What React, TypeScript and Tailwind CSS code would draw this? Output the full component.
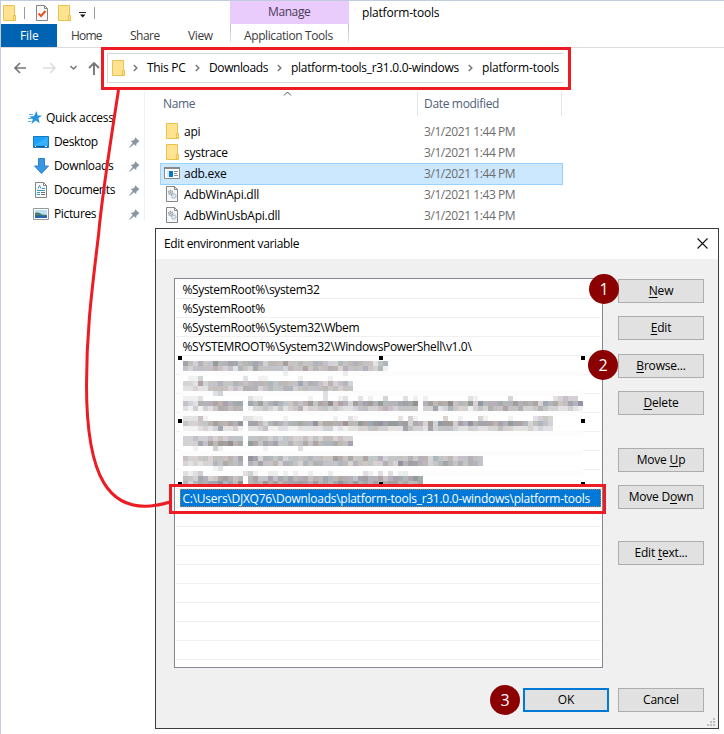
import type { ReactNode } from "react";
import clsx from "clsx";

function Folder() {
  return (
    <svg width="13" height="16" viewBox="0 0 13 16" className="shrink-0">
      <path d="M.5.5h11v10h1v5H.5z" fill="#ffe391" stroke="#e9c34c" />
      <path d="M10.5 15v-4.5h2V15z" fill="#ffe391" stroke="#e9c34c" />
    </svg>
  );
}

function CheckedPage() {
  return (
    <svg width="12" height="16" viewBox="0 0 12 16" className="shrink-0">
      <path d="M.5.5h8l3 3v12H.5z" fill="#f8f8f8" stroke="#858585" />
      <path d="M8.5.5v3h3" fill="none" stroke="#858585" />
      <path d="M2.5 8.5L5 11l4.500-5" fill="none" stroke="#e8541c" strokeWidth="2" />
    </svg>
  );
}

function Exe() {
  return (
    <svg width="16" height="12" viewBox="0 0 16 12" className="shrink-0">
      <path d="M.5.5h15v11H.5z" fill="#fff" stroke="#84898d" />
      <path d="M0 0h16v2H0z" fill="#84898d" />
      <path d="M3 3h2v7H3z" fill="#dceaf5" />
      <path d="M5 4h4v6H5z" fill="#0a74d1" />
      <path d="M10 4.5h4M10 6.5h3M10 8.5h4" stroke="#8b9196" />
    </svg>
  );
}

function Dll() {
  return (
    <svg width="12" height="16" viewBox="0 0 12 16" className="shrink-0">
      <path d="M.5.5h8l3 3v12H.5z" fill="#f8f8f8" stroke="#858585" />
      <path d="M8.5.5v3h3" fill="none" stroke="#858585" />
      <circle cx="4.700" cy="6.500" r="2" fill="#dfe5e9" stroke="#8a969e" strokeDasharray="1.200 .7" strokeWidth="1.500" />
      <circle cx="7.700" cy="10" r="2.100" fill="#e3edf3" stroke="#9fb3c0" strokeDasharray="1.200 .7" strokeWidth="1.500" />
      <circle cx="4.700" cy="6.500" r=".6" fill="#6f7a82" />
    </svg>
  );
}

function Star() {
  return (
    <svg width="14" height="14" viewBox="0 0 14 14">
      <path d="M8.500 0l1.200 4.400 4.300.2-3.600 2.700 1.200 5-4-2.700L3.500 13l1.300-4.700L1.500 5.500 6 5z" fill="#2492dc" />
      <path d="M1 3.500h4M0 7.500h4M0 10.500h3.500" stroke="#58b2ea" />
    </svg>
  );
}

function Desktop() {
  return (
    <svg width="16" height="12" viewBox="0 0 16 12">
      <path d="M.5.5h15v11H.5z" fill="#1ba1f7" stroke="#1679bd" />
      <path d="M1 9.500L14.500 1v8.500z" fill="#3cb0fb" />
      <path d="M1 10.500h14" stroke="#145f94" />
      <path d="M2 10.500h1m9 0h2" stroke="#fff" />
    </svg>
  );
}

function DownArrow() {
  return (
    <svg width="15" height="16" viewBox="0 0 15 16">
      <path d="M4.500.5h6v7.500h4l-7 7.500-7-7.500h4z" fill="#3b96e0" stroke="#2f83cb" />
    </svg>
  );
}

function Document() {
  return (
    <svg width="12" height="16" viewBox="0 0 12 16">
      <path d="M.5.5h8l3 3v12H.5z" fill="#fafafa" stroke="#808487" />
      <path d="M8.500.5v3h3" fill="none" stroke="#808487" />
      <path d="M3 6.500l1.500-3L6 6.500M7 6.500h3M2 8.500h8M2 10.500h3M2 12.500h3" fill="none" stroke="#3d97c9" />
      <path d="M6 10.500h4M6 12.500h4" stroke="#6b7479" />
    </svg>
  );
}

function Pictures() {
  return (
    <svg width="16" height="12" viewBox="0 0 16 12">
      <path d="M.5.5h15v11H.5z" fill="#fff" stroke="#94989b" />
      <path d="M2 2h12v8H2z" fill="#b9def5" />
      <path d="M2 5c3-1 5 0 7 1.500l5 .5v3H2z" fill="#4d8067" />
      <path d="M2 7.500c4-1 8 .5 12 0V10H2z" fill="#2a64a8" />
    </svg>
  );
}

function Pin() {
  return (
    <svg width="11" height="11" viewBox="0 0 11 11">
      <path d="M6.300.3l4.200 4.200-1.300.4-1.800 1.900-.2 2.500-2.200-2L.8 10.800l-.6-.6 3.500-4.100-2-2.100 2.500-.4 1.700-1.700z" fill="#8995a0" />
    </svg>
  );
}

function Chevron({ className }: { className?: string }) {
  return (
    <svg width="5" height="8" viewBox="0 0 5 8" className={clsx("shrink-0", className)}>
      <path d="M.8 1l3 3-3 3" fill="none" stroke="#777" strokeWidth="1.500" />
    </svg>
  );
}

const places = [
  { name: "Desktop", icon: <Desktop /> },
  { name: "Downloads", icon: <DownArrow /> },
  { name: "Documents", icon: <Document /> },
  { name: "Pictures", icon: <Pictures /> },
];

const files = [
  { name: "api", date: "3/1/2021 1:44 PM", icon: <Folder /> },
  { name: "systrace", date: "3/1/2021 1:44 PM", icon: <Folder /> },
  { name: "adb.exe", date: "3/1/2021 1:44 PM", icon: <Exe />, selected: true },
  { name: "AdbWinApi.dll", date: "3/1/2021 1:43 PM", icon: <Dll /> },
  { name: "AdbWinUsbApi.dll", date: "3/1/2021 1:44 PM", icon: <Dll /> },
];

function TitleBar() {
  return (
    <div className="flex h-[23px] items-start">
      <div className="flex w-[229px] items-center pl-0.5 pt-[3px]">
        <Folder />
        <i className="ml-2 h-3 w-px bg-[#9a9a9a]" />
        <span className="ml-[11px] mt-px flex"><CheckedPage /></span>
        <span className="ml-2.5 mt-px flex"><Folder /></span>
        <svg width="8" height="6" viewBox="0 0 8 6" className="ml-2 mt-1">
          <path d="M0 .5h7" stroke="#222" />
          <path d="M1 2.500h5.500L3.700 5.500z" fill="#111" />
        </svg>
        <i className="ml-[7px] h-3 w-px bg-[#9a9a9a]" />
      </div>
      <div className="h-[23px] w-[119px] bg-[#e9cbfc] pl-[38px] leading-[21px] tracking-[-0.4px] text-[#4b3b57]">
        Manage
      </div>
      <div className="pl-[13px] leading-[24px] tracking-[-0.18px]">platform-tools</div>
    </div>
  );
}

function RibbonTabs() {
  return (
    <div className="flex h-6 border-b border-[#dadbdc] leading-[24px] tracking-[-0.4px] text-[#3b3b3b]">
      <div className="h-[23px] w-14 bg-[#0063b1] pl-[19px] tracking-[-0.1px] text-white">File</div>
      <div className="w-[59px] pl-[14px] tracking-[-0.8px]">Home</div>
      <div className="w-[58px] pl-[14px] tracking-[-0.5px]">Share</div>
      <div className="w-[56px] pl-[14px]">View</div>
      <i className="h-[18px] w-px bg-gradient-to-b from-[#bbb] to-[#e5e5e5]" />
      <div className="w-[117px] pl-[13px]">Application Tools</div>
      <i className="h-[18px] w-px bg-gradient-to-b from-[#bbb] to-[#e5e5e5]" />
    </div>
  );
}

function AddressBar() {
  return (
    <div className="flex h-[43px] pt-[5px]">
      <div className="flex h-[30px] w-[106px] items-center pl-[13px]">
        <svg width="87" height="14" viewBox="0 0 87 14" fill="none">
          <path d="M12 7H1.500M6 2L1 7l5 5" stroke="#777" strokeWidth="1.700" />
          <path d="M29 7h11.500M36 2l5 5-5 5" stroke="#ddd" strokeWidth="1.500" />
          <path d="M56.500 5l3 3 3-3" stroke="#777" strokeWidth="1.500" />
          <path d="M80 14V2M75 7l5-5 5 5" stroke="#777" strokeWidth="1.900" />
        </svg>
      </div>
      <div className="flex h-[30px] w-[456px] items-center border-y border-l border-[#d9d9d9] pl-1">
        <Folder />
        <Chevron className="ml-2" />
        <span className="ml-[9px] w-[48px]">This PC</span>
        <Chevron />
        <span className="ml-[9px] w-[68px] tracking-[-0.4px]">Downloads</span>
        <Chevron />
        <span className="ml-[9px] w-[177px] tracking-[-0.3px]">platform-tools_r31.0.0-windows</span>
        <Chevron />
        <span className="ml-[9px] tracking-[-0.2px]">platform-tools</span>
      </div>
    </div>
  );
}

function NavPane() {
  return (
    <div className="h-[129px] w-[144px] border-r border-[#f0f0f0] pt-[15px]">
      <div className="flex h-6 items-center pl-[27px]">
        <Star />
        <span className="ml-1">Quick access</span>
      </div>
      {places.map((p) => (
        <div key={p.name} className="flex h-6 items-center pl-8">
          <span className="flex w-4 justify-center">{p.icon}</span>
          <span className="ml-[5px] w-[75px] tracking-[-0.35px]">{p.name}</span>
          <Pin />
        </div>
      ))}
    </div>
  );
}

function FileList() {
  return (
    <div className="w-[418px] pl-[15px]">
      <div className="flex h-[25px] leading-[25px] tracking-[-0.33px] text-[#4f6078]">
        <div className="flex w-[258px] border-r border-[#e5e5e5] pl-[3px]">
          <span className="w-[120px]">Name</span>
          <svg width="9" height="5" viewBox="0 0 9 5">
            <path d="M1 4.500l3.500-3.500L8 4.500" fill="none" stroke="#555" />
          </svg>
        </div>
        <div className="w-36 border-r border-[#e5e5e5] pl-1.5">Date modified</div>
      </div>
      <div className="pt-[5px]">
        {files.map((f) => (
          <div
            key={f.name}
            className={clsx(
              "flex w-[403px] items-start leading-[22px]",
              f.selected
                ? "-mb-px h-[22px] bg-[#cce8ff] outline outline-1 -outline-offset-1 outline-[#99d1ff]"
                : "h-[21px]"
            )}
          >
            <span className="flex h-5 w-6 items-center justify-center">{f.icon}</span>
            <span className="w-60 tracking-[-0.25px]">{f.name}</span>
            <span className="tracking-[-0.42px] text-[#6d6d6d]">{f.date}</span>
          </div>
        ))}
      </div>
    </div>
  );
}

const variables = [
  "%SystemRoot%\\system32",
  "%SystemRoot%",
  "%SystemRoot%\\System32\\Wbem",
  "%SYSTEMROOT%\\System32\\WindowsPowerShell\\v1.0\\",
  "", "", "", "", "", "", "",
  "C:\\Users\\DJXQ76\\Downloads\\platform-tools_r31.0.0-windows\\platform-tools",
  "", "", "", "", "", "", "", "",
];

// Darkness of each 5px block, one digit per block (0 = blank, 9 = darkest).
const mosaic: [number, string][] = [
  [0, "64354475566455653554644544554335455544245"],
  [1, "43444454342543644444354464544553544454351"],
  [2, "00000000000000000000100000000000100000000"],
  [3, "01130000000020011000000100000100000000"],
  [4, "3326344544554555554554464554353453"],
  [5, "2232244443435553454455344444544344"],
  [6, "0000002300000000000000000000200000"],
  [7, "11120000000002110000000001002001200201003000201010000000021000000300000000234330"],
  [8, "4325556565660656456544545746574653656757555666705656574557375556557565636564465731"],
  [9, "21313246545501334324234523344343223443345434444033623543313435446445334543322321"],
  [11, "22241000000022110000100000000010021000000002031000003001000310000100002343"],
  [12, "43344565565706653565455655746655755766776776736537377736575666565766534543"],
  [13, "11123236223102234112211222223312122334433222643326344432233223343322232322"],
  [15, "3343343434440444434344334343443433"],
  [16, "3336465767560764656445446465556546"],
  [17, "0010003100000000100000020000000000"],
  [19, "433443444546076355453444454444654644644534444545535445344544"],
  [20, "323233546545054644535543545544455354443354375665534565454554"],
  [21, "000000120000000000000000000000000000000000000000000000000000"],
  [22, "212300000000231001101010010001000000210202011000"],
  [23, "443653466545056446465655645565565546655645665676"],
  [24, "535656675658056575656666657565676575656566656556"],
];

const tints = ["#8b8b93", "#9a8b8b", "#868f99", "#8f8699", "#99938f", "#8b9391", "#8a8585"];

function Mosaic() {
  return (
    <svg width="403" height="128" viewBox="0 0 403 128" shapeRendering="crispEdges">
      <path d="M0 0h403v128H0z" fill="#fff" />
      {[14, 34, 54, 74, 94, 114].map((y) => (
        <path key={y} d={`M0 ${y}h403v5H0z`} fill="#fcfcfc" />
      ))}
      {mosaic.flatMap(([row, cells]) =>
        cells.split("").map((c, i) =>
          c === "0" || i > 79 ? null : (
            <rect
              key={`${row}-${i}`}
              x={3 + i * 5}
              y={4 + row * 5}
              width="5"
              height="5"
              fill={tints[(i * 5 + row * 3 + ((i * i) % 11)) % tints.length]}
              opacity={Math.min(1, Number(c) * 0.13)}
            />
          )
        )
      )}
    </svg>
  );
}

function VariableList() {
  return (
    <div className="relative h-[390px] w-[429px] border border-[#828790] bg-white px-px pt-px">
      {variables.map((v, i) => (
        <div key={i} className="h-[19px] border-b border-[#f0f0f0] pl-1">
          <div
            className={clsx(
              "h-[18px] whitespace-nowrap pl-[2.500px] leading-[19px]",
              i === 11
                ? "bg-[#0078d7] tracking-[-0.26px] text-white outline-dotted outline-1 -outline-offset-1 outline-[#ff8728]/70"
                : "tracking-[-0.34px]"
            )}
          >
            {v}
          </div>
        </div>
      ))}
      <div className="absolute left-[5px] top-[78px]">
        <Mosaic />
      </div>
    </div>
  );
}

function Button({ children, className }: { children: ReactNode; className?: string }) {
  return (
    <button
      className={clsx(
        "flex h-6 w-[86px] items-center justify-center bg-[#e1e1e1] tracking-[-0.2px]",
        className ?? "border border-[#adadad]"
      )}
    >
      <span>{children}</span>
    </button>
  );
}

function Key({ children }: { children: string }) {
  return <span className="underline decoration-1 underline-offset-2">{children}</span>;
}

function EnvironmentDialog() {
  return (
    <div className="absolute left-[155px] top-[228px] h-[501px] w-[564px] border border-[#3c3c3c] bg-[#f0f0f0]">
      <div className="flex h-[30px] items-center justify-between bg-white pl-2 pr-2.5">
        <span className="tracking-[-0.36px]">Edit environment variable</span>
        <svg width="11" height="11" viewBox="0 0 11 11" className="-mt-0.5">
          <path d="M.5.5l10 10M10.500.5l-10 10" stroke="#111" strokeWidth="1.100" />
        </svg>
      </div>
      <div className="flex pl-[18px] pt-[19px]">
        <VariableList />
        <div className="flex flex-col pl-[15px] pt-px">
          <Button><Key>N</Key>ew</Button>
          <div className="h-[13px]" />
          <Button><Key>E</Key>dit</Button>
          <div className="h-[14px]" />
          <Button><Key>B</Key>rowse...</Button>
          <div className="h-[13px]" />
          <Button><Key>D</Key>elete</Button>
          <div className="h-[33px]" />
          <Button>Move <Key>U</Key>p</Button>
          <div className="h-[13px]" />
          <Button>Move D<Key>o</Key>wn</Button>
          <div className="h-[32px]" />
          <Button>Edit <Key>t</Key>ext...</Button>
        </div>
      </div>
      <div className="flex justify-end gap-[9px] pr-3.5 pt-5">
        <Button className="border-2 border-[#0078d7]">OK</Button>
        <Button>Cancel</Button>
      </div>
      <svg width="8" height="8" viewBox="0 0 8 8" className="ml-auto mr-[3px] mt-1.5">
        <path d="M6 0h2v2H6zM3 3h2v2H3zM6 3h2v2H6zM0 6h2v2H0zM3 6h2v2H3zM6 6h2v2H6z" fill="#bfbfbf" />
      </svg>
    </div>
  );
}

const handles = [178, 379, 581].flatMap((x) =>
  [356, 419, 482].filter((y) => y !== 419 || x !== 379).map((y) => [x, y])
);

function Step({ n, className }: { n: number; className: string }) {
  return (
    <span
      className={clsx(
        "absolute flex size-[30px] items-center justify-center rounded-full bg-[#8b0000] text-[16px] text-white",
        className
      )}
    >
      {n}
    </span>
  );
}

function Annotations() {
  return (
    <>
      <svg width="724" height="734" viewBox="0 0 724 734" className="pointer-events-none absolute left-0 top-0">
        {handles.map(([x, y]) => (
          <rect key={`${x}-${y}`} x={x} y={y} width="4" height="4" />
        ))}
        <g fill="none" stroke="#ed1c24" strokeWidth="3">
          <path d="M118.500 90C110 145 102 195 98.500 235C92 290 86.500 330 86.500 385C86.500 470 105 522 170 502" />
          <path d="M102.500 48.500h467v40h-467zM170.500 485.500h434v27h-434z" />
        </g>
      </svg>
      <Step n={1} className="left-[589px] top-[274px]" />
      <Step n={2} className="left-[588px] top-[350px]" />
      <Step n={3} className="left-[490px] top-[685px]" />
    </>
  );
}

export default function App() {
  return (
    <main className="relative h-[734px] w-[724px] overflow-hidden border-l border-t border-[#c3cbdf] bg-white font-['Open_Sans',sans-serif] text-[12px] leading-4 tracking-[-0.3px] text-black">
      <TitleBar />
      <RibbonTabs />
      <AddressBar />
      <div className="flex">
        <NavPane />
        <FileList />
      </div>
      {/* pulled back over the window's own 1px frame */}
      <div className="absolute -left-px -top-px h-[734px] w-[724px]">
        <EnvironmentDialog />
        <Annotations />
      </div>
    </main>
  );
}
